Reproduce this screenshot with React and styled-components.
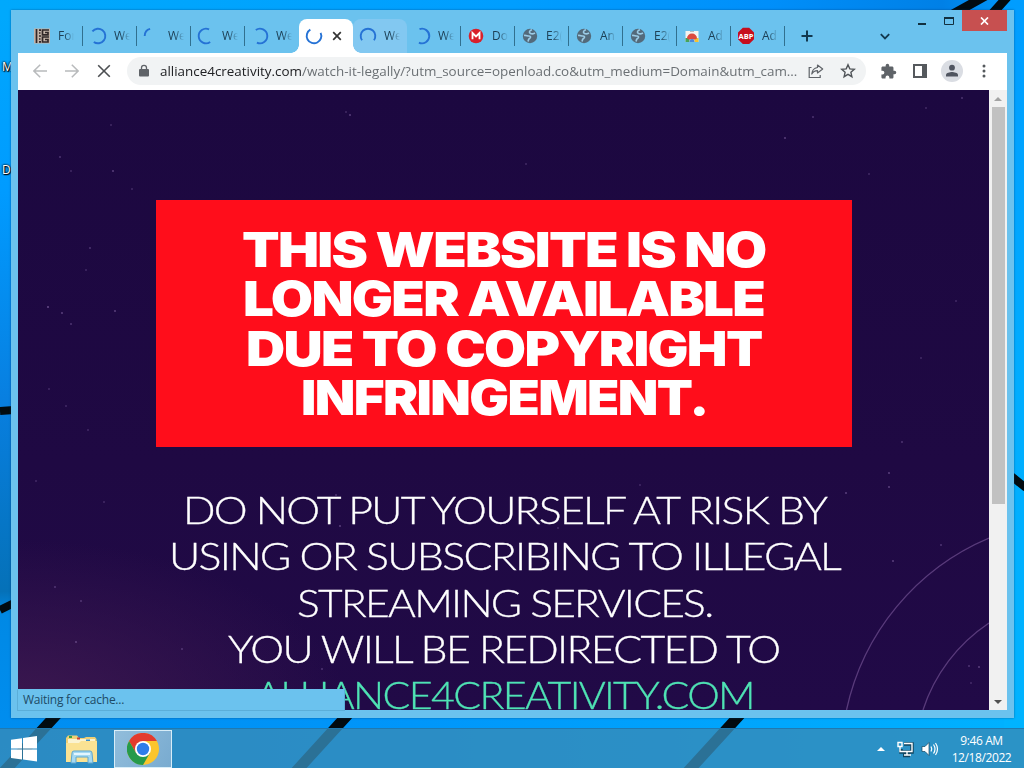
import React, { useLayoutEffect, useRef, useState } from "react";
import styled, { createGlobalStyle, css } from "styled-components";

const GlobalStyle = createGlobalStyle`
  * {
    box-sizing: border-box;
  }
  body {
    margin: 0;
    overflow: hidden;
    font-family: "Open Sans", "Noto Sans", sans-serif;
  }
`;

const Desktop = styled.div`
  position: relative;
  width: 1024px;
  height: 768px;
  overflow: hidden;
  display: flex;
  flex-direction: column;
  background: linear-gradient(90deg, #008df0 0%, #0096fa 40%, #00b2ff 100%);
`;

const Wallpaper = styled.svg`
  position: absolute;
  top: 0;
  left: 0;
`;

const DesktopLabel = styled.span`
  position: absolute;
  left: 2px;
  top: ${(props) => props.$top}px;
  font-size: 12px;
  line-height: 14px;
  color: white;
  text-shadow: 1px 1px 1px black, 0 0 2px black, 0 0 2px black;
`;

const Window = styled.div`
  position: relative;
  width: 1003px;
  height: 708px;
  margin: 10px 0 10px 11px;
  padding: 0 7px 8px;
  display: flex;
  flex-direction: column;
  background: #6bc2ee;
  box-shadow: 0 0 2px rgba(0, 50, 100, 0.55);
`;

const TabStrip = styled.div`
  height: 43px;
  padding-left: 11px;
  display: flex;
  align-items: flex-end;
`;

const TabCell = styled.div`
  position: relative;
  width: 54px;
  height: 34px;
  padding-left: 7px;
  display: flex;
  align-items: center;
  gap: 8px;
  border-radius: 8px 8px 0 0;
  &:first-child {
    padding-left: 5px;
  }
  ${(props) =>
    props.$hover &&
    css`
      background: #82c8f1;
    `}
  ${(props) =>
    props.$active &&
    css`
      gap: 7px;
      background: white;
      &:before,
      &:after {
        content: "";
        position: absolute;
        bottom: 0;
        width: 8px;
        height: 8px;
      }
      &:before {
        left: -8px;
        background: radial-gradient(circle at 0 0, transparent 7.5px, white 8px);
      }
      &:after {
        right: -8px;
        z-index: 1;
        background: radial-gradient(circle at 100% 0, transparent 7.5px, white 8px);
      }
    `}
  ${(props) =>
    props.$divider &&
    css`
      &:after {
        content: "";
        position: absolute;
        right: 0;
        top: 7px;
        width: 1px;
        height: 20px;
        background: #31708f;
      }
    `}
`;

const TabTitle = styled.span`
  width: 16px;
  overflow: hidden;
  white-space: nowrap;
  font-size: 12px;
  line-height: 18px;
  color: #1d4056;
  mask-image: linear-gradient(90deg, black 40%, transparent 100%);
`;

const StripButton = styled.div`
  width: 28px;
  height: 34px;
  margin-left: ${(props) => props.$gap}px;
  display: flex;
  align-items: center;
  justify-content: center;
`;

const WindowControls = styled.div`
  align-self: flex-start;
  margin-left: auto;
  display: flex;
`;

const ControlButton = styled.div`
  width: ${(props) => (props.$close ? 45 : 27)}px;
  height: 21px;
  display: flex;
  align-items: center;
  justify-content: center;
  background: ${(props) => (props.$close ? "#c75050" : "transparent")};
`;

const Toolbar = styled.div`
  height: 37px;
  padding: 0 7px 1px 6px;
  display: flex;
  align-items: center;
  background: white;
`;

const ToolButton = styled.div`
  width: 32px;
  height: 32px;
  display: flex;
  align-items: center;
  justify-content: center;
`;

const Omnibox = styled.div`
  width: 739px;
  height: 28px;
  margin: 0 6px 0 7px;
  padding: 0 2px 0 10px;
  display: flex;
  align-items: center;
  border-radius: 14px;
  background: #f1f3f4;
`;

const UrlBox = styled.div`
  width: 637px;
  margin-left: 9px;
  margin-right: 3px;
  font-size: 13.5px;
  line-height: 20px;
  color: #6b7074;
`;

const Host = styled.span`
  color: #202124;
`;

const Viewport = styled.div`
  flex: 1;
  min-height: 0;
  display: flex;
`;

const Page = styled.div`
  position: relative;
  width: 971px;
  padding-top: 110px;
  overflow: hidden;
  display: flex;
  flex-direction: column;
  align-items: center;
  background: radial-gradient(ellipse 330px 170px at 0% 100%, #3c184f 0%, rgba(60, 24, 79, 0) 100%),
    linear-gradient(180deg, #1c0840 0%, #1f0943 60%, #210a47 100%);
`;

const Sky = styled.svg`
  position: absolute;
  top: 0;
  left: 0;
`;

const Banner = styled.div`
  position: relative;
  flex-shrink: 0;
  width: 696px;
  height: 247px;
  padding-top: 25px;
  display: flex;
  flex-direction: column;
  align-items: center;
  background: #ff0d1b;
  font-family: Inter, sans-serif;
  font-weight: 900;
  font-size: 48.5px;
  line-height: 49.3px;
  letter-spacing: -1.5px;
  color: white;
`;

const Message = styled.div`
  position: relative;
  flex-shrink: 0;
  padding-top: 40px;
  display: flex;
  flex-direction: column;
  align-items: center;
  font-family: Lato, sans-serif;
  font-weight: 300;
  font-size: 37px;
  line-height: 46.3px;
  letter-spacing: -1.5px;
  -webkit-text-stroke: 0.3px;
  color: white;
`;

const FitBox = styled.div`
  width: ${(props) => props.$width}px;
  margin-left: ${(props) => props.$shift || 0}px;
  white-space: nowrap;
  color: ${(props) => props.$color || "inherit"};
`;

const FitText = styled.span`
  display: inline-block;
  transform-origin: 0 50%;
`;

const Scrollbar = styled.div`
  width: 18px;
  padding: 0 2px;
  display: flex;
  flex-direction: column;
  align-items: center;
  background: #f1f1f1;
`;

const ScrollArrow = styled.div`
  height: 17px;
  display: flex;
  align-items: center;
`;

const ScrollThumb = styled.div`
  width: 13px;
  height: 397px;
  margin-bottom: auto;
  background: #c1c1c1;
`;

const StatusBubble = styled.div`
  position: absolute;
  left: 6px;
  bottom: 7px;
  width: 328px;
  height: 22px;
  padding-left: 5px;
  border: 1px solid #5baed9;
  border-top-color: #6bc2ee;
  background: #6bc2ee;
  font-size: 12px;
  line-height: 20px;
  letter-spacing: -0.25px;
  color: #1d4b66;
`;

const Taskbar = styled.div`
  position: relative;
  height: 40px;
  display: flex;
  align-items: center;
  border-top: 1px solid #2079b0;
  background: rgba(54, 139, 184, 0.8);
`;

const TaskButton = styled.div`
  width: ${(props) => props.$width}px;
  height: 38px;
  margin-left: ${(props) => props.$gap || 0}px;
  display: flex;
  align-items: center;
  justify-content: center;
  ${(props) =>
    props.$active &&
    css`
      border: 1px solid #d7edf8;
      background: linear-gradient(120deg, #91bddb, #79abd0);
    `}
`;

const Tray = styled.div`
  margin-left: auto;
  padding-right: 4px;
  display: flex;
  align-items: center;
`;

const Clock = styled.div`
  width: 77px;
  font-size: 12px;
  line-height: 17px;
  letter-spacing: -0.4px;
  text-align: center;
  color: white;
`;

const tabs = [
  { icon: "forum", title: "For", divider: true },
  { icon: "spinner", arc: [-50, 215], title: "We", divider: true },
  { icon: "spinner", arc: [270, 345], title: "We", divider: true },
  { icon: "spinner", arc: [145, 385], title: "We", divider: true },
  { icon: "spinner", arc: [-35, 205], title: "We" },
  { icon: "spinner", arc: [65, 330], active: true },
  { icon: "spinner", arc: [-125, 125], title: "We", hover: true },
  { icon: "spinner", arc: [-20, 205], title: "We", divider: true },
  { icon: "mega", title: "Do", divider: true },
  { icon: "globe", title: "E2(", divider: true },
  { icon: "globe", title: "An", divider: true },
  { icon: "globe", title: "E2(", divider: true },
  { icon: "store", title: "Ad", divider: true },
  { icon: "abp", title: "Ad", divider: true },
];

const stars = [
  [93, 35, 0.3], [42, 67, 0.4], [53, 81, 0.3], [95, 81, 0.5], [114, 99, 0.3],
  [72, 158, 0.4], [68, 180, 0.3], [30, 217, 0.6], [44, 223, 0.5], [53, 234, 0.4],
  [97, 221, 0.5], [31, 299, 0.3], [48, 316, 0.3], [70, 340, 0.3], [18, 391, 0.3],
  [86, 412, 0.3], [37, 497, 0.4], [63, 511, 0.4], [58, 552, 0.5], [164, 559, 0.4],
  [332, 25, 0.5], [328, 22, 0.3], [508, 74, 0.3], [795, 27, 0.4], [767, 48, 0.5],
  [944, 8, 0.4], [908, 18, 0.3], [851, 84, 0.3], [871, 383, 0.5], [871, 397, 0.5],
  [828, 403, 0.5], [923, 455, 0.4], [875, 471, 0.5], [951, 576, 0.4], [961, 577, 0.5],
  [953, 593, 0.3], [322, 436, 0.5], [318, 405, 0.4], [304, 579, 0.4], [884, 352, 0.4],
  [168, 604, 0.3], [622, 395, 0.3], [903, 268, 0.3], [938, 211, 0.3], [540, 438, 0.3],
];

function arcPath(start, end) {
  const point = (deg) => {
    const a = ((deg - 90) * Math.PI) / 180;
    return `${8 + 7.3 * Math.cos(a)} ${8 + 7.3 * Math.sin(a)}`;
  };
  return `M${point(start)}A7.3 7.3 0 ${end - start > 180 ? 1 : 0} 1 ${point(end)}`;
}

function Favicon({ icon, arc }) {
  return (
    <svg width="16" height="16" viewBox="0 0 16 16" overflow="visible">
      {icon === "spinner" && (
        <path d={arcPath(arc[0], arc[1])} fill="none" stroke="#2572d5" strokeWidth="1.9" />
      )}
      {icon === "forum" && (
        <g>
          <path d="M0 .5h16v15H0z" fill="#c3b4a9" />
          <path
            d="M2.500 1v14M5 2.200h2M5 5h1.500M5 8h2M5 11h1.500M5 13.800h2M15 2H8.500v4.800H14V4.500h-3M15 9H8.500v5H14v-2.500h-3"
            fill="none"
            stroke="#312728"
            strokeWidth="1.7"
          />
        </g>
      )}
      {icon === "mega" && (
        <g>
          <circle cx="8" cy="8" r="7.3" fill="#d9202b" />
          <path d="M4.500 11.200V5L8 8.500 11.500 5v6.200" fill="none" stroke="white" strokeWidth="1.8" />
        </g>
      )}
      {icon === "globe" && (
        <g>
          <circle cx="8" cy="8" r="7.2" fill="#536a7b" />
          <path
            d="M2 7.500c2-.5 3 .5 5 .5s2 1.500.5 2.500-1 2-1.500 3M10 1.800C7.500 2.500 6.500 4.500 8.500 5.500s2.500.5 4.500-.5"
            fill="none"
            stroke="#9bcbe6"
            strokeWidth="1.6"
          />
        </g>
      )}
      {icon === "store" && (
        <g>
          <path d="M1.500 3h13v11h-13z" fill="#f5f3ef" />
          <path d="M1.500 10h4v4h-4z" fill="#47a35b" />
          <path d="M10.500 10h4v4h-4z" fill="#f3c230" />
          <path d="M3 10.500a5 5 0 0 1 10 0l-2 1H5z" fill="#dc4a3e" />
          <path d="M5.500 14a2.500 3 0 0 1 5 0z" fill="#4b88dc" />
          <path d="M6 3.500h4" stroke="#b6b9bd" />
        </g>
      )}
      {icon === "abp" && (
        <g>
          <path d="M4.800 -.3h6.400l4.800 4.800v6.800l-4.800 4.800H4.800L0 11.300V4.500z" fill="#c70d1d" />
          <text
            x="8"
            y="10.8"
            textAnchor="middle"
            fontSize="7.5"
            fontWeight="700"
            fontFamily="Open Sans, sans-serif"
            fill="white"
          >
            ABP
          </text>
        </g>
      )}
    </svg>
  );
}

// Stretches one line of text to the given width.
function FitLine({ width, shift, color, children }) {
  const ref = useRef(null);
  const [scale, setScale] = useState(1);

  useLayoutEffect(() => {
    const fit = () => setScale(width / ref.current.offsetWidth);
    fit();
    document.fonts.ready.then(fit);
  }, [width]);

  return (
    <FitBox $width={width} $shift={shift} $color={color}>
      <FitText ref={ref} style={{ transform: `scaleX(${scale})` }}>
        {children}
      </FitText>
    </FitBox>
  );
}

function Tab({ tab }) {
  return (
    <TabCell $active={tab.active} $hover={tab.hover} $divider={tab.divider}>
      <Favicon icon={tab.icon} arc={tab.arc} />
      {tab.active ? (
        <svg width="16" height="16" viewBox="0 0 16 16">
          <path d="M4.200 4.200l7.600 7.600M11.800 4.200l-7.600 7.600" stroke="#333" strokeWidth="1.700" />
        </svg>
      ) : (
        <TabTitle>{tab.title}</TabTitle>
      )}
    </TabCell>
  );
}

function Tabs() {
  return (
    <TabStrip>
      {tabs.map((tab, i) => (
        <Tab key={i} tab={tab} />
      ))}
      <StripButton $gap={8}>
        <svg width="12" height="12" viewBox="0 0 12 12">
          <path d="M6 .5v11M.5 6h11" stroke="#12384f" strokeWidth="2" />
        </svg>
      </StripButton>
      <StripButton $gap={50}>
        <svg width="10" height="7" viewBox="0 0 10 7">
          <path d="M.8 1.200L5 5.400l4.200-4.200" fill="none" stroke="#12384f" strokeWidth="1.800" />
        </svg>
      </StripButton>
      <WindowControls>
        <ControlButton>
          <svg width="10" height="8" viewBox="0 0 10 8">
            <path d="M1 7h8" stroke="#12303f" strokeWidth="2" />
          </svg>
        </ControlButton>
        <ControlButton>
          <svg width="10" height="8" viewBox="0 0 10 8">
            <path d="M.5 1v6.500h9V1" fill="none" stroke="#12303f" />
            <path d="M0 1h10" stroke="#12303f" strokeWidth="2" />
          </svg>
        </ControlButton>
        <ControlButton $close>
          <svg width="9" height="8" viewBox="0 0 9 8">
            <path d="M1 .5l7 7M8 .5l-7 7" stroke="white" strokeWidth="1.700" />
          </svg>
        </ControlButton>
      </WindowControls>
    </TabStrip>
  );
}

function AddressBar() {
  return (
    <Toolbar>
      <ToolButton>
        <svg width="14" height="14" viewBox="0 0 14 14" fill="none" stroke="#b8babc" strokeWidth="1.500">
          <path d="M14 7H1M7.200 .7L.9 7l6.300 6.300" />
        </svg>
      </ToolButton>
      <ToolButton>
        <svg width="14" height="14" viewBox="0 0 14 14" fill="none" stroke="#b8babc" strokeWidth="1.500">
          <path d="M0 7h13M6.800 .7L13.100 7l-6.300 6.300" />
        </svg>
      </ToolButton>
      <ToolButton>
        <svg width="14" height="14" viewBox="0 0 14 14" stroke="#4c4f52" strokeWidth="1.600">
          <path d="M1.200 1.200l11.600 11.600M12.800 1.200L1.200 12.800" />
        </svg>
      </ToolButton>
      <Omnibox>
        <svg width="14" height="14" viewBox="0 0 14 14">
          <path d="M3 5h8a1 1 0 0 1 1 1v5.500a1 1 0 0 1-1 1H3a1 1 0 0 1-1-1V6a1 1 0 0 1 1-1z" fill="#5f6368" />
          <path d="M4.500 5.500V3.800a2.500 2.500 0 0 1 5 0v1.700" fill="none" stroke="#5f6368" strokeWidth="1.300" />
        </svg>
        <UrlBox>
          <FitLine width={637}>
            <Host>alliance4creativity.com</Host>
            /watch-it-legally/?utm_source=openload.co&amp;utm_medium=Domain&amp;utm_cam...
          </FitLine>
        </UrlBox>
        <ToolButton>
          <svg width="16" height="16" viewBox="0 0 16 16" fill="none" stroke="#5f6368" strokeWidth="1.200">
            <path d="M3.500 4.500H1.200v10h11v-2.500" />
            <path d="M9.500 2l5.200 4-5.200 4V7.700C6.500 7.700 5 8.800 3.800 11c.3-3.600 2.200-6 5.700-6.500z" strokeLinejoin="round" />
          </svg>
        </ToolButton>
        <ToolButton>
          <svg width="16" height="16" viewBox="0 0 16 16" fill="none" stroke="#505458" strokeWidth="1.400">
            <path d="M8 1.800l1.800 4.100 4.500.4-3.400 3 1 4.400L8 11.400l-3.900 2.300 1-4.400-3.400-3 4.500-.4z" />
          </svg>
        </ToolButton>
      </Omnibox>
      <ToolButton>
        <svg width="17" height="17" viewBox="0 0 24 24" fill="#5f6368">
          <path d="M20.500 11H19V7c0-1.100-.9-2-2-2h-4V3.500a2.500 2.500 0 0 0-5 0V5H4c-1.100 0-2 .9-2 2v3.800h1.500a2.700 2.700 0 0 1 0 5.400H2V20c0 1.100.9 2 2 2h3.800v-1.500a2.700 2.700 0 0 1 5.400 0V22H17c1.100 0 2-.9 2-2v-4h1.500a2.500 2.500 0 0 0 0-5z" />
        </svg>
      </ToolButton>
      <ToolButton>
        <svg width="14" height="14" viewBox="0 0 14 14">
          <path d="M1 1h12v12H1z" fill="none" stroke="#55595d" strokeWidth="2" />
          <path d="M9 0h5v14H9z" fill="#55595d" />
        </svg>
      </ToolButton>
      <ToolButton>
        <svg width="22" height="22" viewBox="0 0 22 22">
          <circle cx="11" cy="11" r="11" fill="#dadde3" />
          <circle cx="11" cy="7.700" r="2.900" fill="#505560" />
          <path d="M5 16.500v-1.700c0-2 4-2.900 6-2.900s6 .9 6 2.900v1.700z" fill="#505560" />
        </svg>
      </ToolButton>
      <ToolButton>
        <svg width="4" height="14" viewBox="0 0 4 14" fill="#55595d">
          <circle cx="2" cy="2" r="1.500" />
          <circle cx="2" cy="7" r="1.500" />
          <circle cx="2" cy="12" r="1.500" />
        </svg>
      </ToolButton>
    </Toolbar>
  );
}

function Content() {
  return (
    <Page>
      <Sky width="971" height="620" viewBox="0 0 971 620">
        {stars.map(([x, y, opacity], i) => (
          <circle key={i} cx={x} cy={y} r="1.100" fill="#8d6fae" opacity={opacity} />
        ))}
        <g fill="none" stroke="#593b7b" strokeWidth="1.300">
          <path d="M971 448A242 242 0 0 0 828.500 620" />
          <path d="M971 533A166 166 0 0 0 905 620" />
        </g>
      </Sky>
      <Banner>
        <FitLine width={523}>THIS WEBSITE IS NO</FitLine>
        <FitLine width={521}>LONGER AVAILABLE</FitLine>
        <FitLine width={515}>DUE TO COPYRIGHT</FitLine>
        <FitLine width={407} shift={2}>INFRINGEMENT.</FitLine>
      </Banner>
      <Message>
        <FitLine width={643} shift={2}>DO NOT PUT YOURSELF AT RISK BY</FitLine>
        <FitLine width={671} shift={2}>USING OR SUBSCRIBING TO ILLEGAL</FitLine>
        <FitLine width={415} shift={2}>STREAMING SERVICES.</FitLine>
        <FitLine width={551}>YOU WILL BE REDIRECTED TO</FitLine>
        <FitLine width={499} shift={2} color="#4fe3b4">ALLIANCE4CREATIVITY.COM</FitLine>
      </Message>
    </Page>
  );
}

function StartBar() {
  return (
    <Taskbar>
      <TaskButton $width={48}>
        <svg width="26" height="26" viewBox="0 0 26 26" fill="white">
          <path d="M0 3.800l11-1.600v10.200H0zM12 2l14-2v12.400H12zM0 13.400h11v10.200L0 22zM12 13.400h14V25.500l-14-2z" />
        </svg>
      </TaskButton>
      <TaskButton $width={50} $gap={8}>
        <svg width="33" height="30" viewBox="0 0 33 30">
          <path d="M1 4l2-2.500h9L14 4h5l2-1h9l1.500 2v23L1 28z" fill="#efcf75" />
          <path d="M3 5h27v5H3z" fill="#faf3d1" />
          <path d="M4 3h3" stroke="#34a247" strokeWidth="2" />
          <path d="M12 4.500h3" stroke="#cf4032" strokeWidth="2" />
          <path d="M21 6.500h4" stroke="#3a8fcb" strokeWidth="2" />
          <path d="M1 9h13l2-2h16v21H1z" fill="#fae293" />
          <path d="M6 29l1-10q0-2 2-2h16q2 0 2 2l1 10h-5v-6H11v6z" fill="#a5d9f2" stroke="#5da6cf" />
          <path d="M9 20h16" stroke="#e3f6ff" strokeWidth="2" />
        </svg>
      </TaskButton>
      <TaskButton $width={58} $gap={8} $active>
        <svg width="32" height="32" viewBox="0 0 32 32">
          <circle cx="16" cy="16" r="16" fill="#fbc52d" />
          <path d="M2.100 8A16 16 0 0 1 29.900 8H16l-6.900 12z" fill="#e33b2e" />
          <path d="M2.100 8A16 16 0 0 0 16 32l6.900-12H9.100z" fill="#269a4b" />
          <circle cx="16" cy="16" r="8" fill="white" />
          <circle cx="16" cy="16" r="6.200" fill="#2f7de9" />
        </svg>
      </TaskButton>
      <Tray>
        <svg width="74" height="20" viewBox="0 0 74 20" fill="none">
          <path d="M8 12h8l-4-4z" fill="white" />
          <path d="M35 5h8v8H32v-3M37 13v3M34 16.500h7" stroke="#12455f" strokeWidth="3.500" />
          <path d="M29 3.500h4v4h-4zM31 7.500v5h3M35 4.500h8v8H33M38 12.500v3M35 16h7" stroke="white" strokeWidth="1.400" />
          <path d="M53 7.500h3l4-4v13l-4-4h-3z" fill="white" stroke="#12455f" strokeWidth=".7" />
          <path d="M62 7.500q1.500 2.500 0 5M64.500 5.500q3 4.500 0 9M66.500 4q4 6 0 12" stroke="white" strokeWidth="1.200" />
        </svg>
        <Clock>
          <div>9:46 AM</div>
          <div>12/18/2022</div>
        </Clock>
      </Tray>
    </Taskbar>
  );
}

function App() {
  return (
    <Desktop>
      <GlobalStyle />
      <Wallpaper width="1024" height="768" viewBox="0 0 1024 768">
        <defs>
          <linearGradient id="leftEdge" x1="0" y1="0" x2="0" y2="1">
            <stop offset="0" stopColor="#00a9fc" />
            <stop offset=".25" stopColor="#009bff" />
            <stop offset=".52" stopColor="#087fe0" />
            <stop offset=".77" stopColor="#0571b8" />
            <stop offset=".8" stopColor="#0089e5" />
            <stop offset="1" stopColor="#008ff3" />
          </linearGradient>
          <linearGradient id="topEdge" x1="0" y1="0" x2="1" y2="0">
            <stop offset="0" stopColor="#00a9fc" />
            <stop offset=".5" stopColor="#009eff" />
            <stop offset=".75" stopColor="#008ffa" />
            <stop offset=".92" stopColor="#0080e6" />
            <stop offset="1" stopColor="#009dff" />
          </linearGradient>
          <linearGradient id="rightEdge" x1="0" y1="0" x2="0" y2="1">
            <stop offset="0" stopColor="#009dff" />
            <stop offset=".5" stopColor="#00adff" />
            <stop offset="1" stopColor="#00b4ff" />
          </linearGradient>
        </defs>
        <path d="M0 0h20v768H0z" fill="url(#leftEdge)" />
        <path d="M0 0h1024v20H0z" fill="url(#topEdge)" />
        <path d="M1004 0h20v768h-20z" fill="url(#rightEdge)" />
        <g stroke="#020b10" strokeWidth="8" fill="none">
          <path d="M0 411l14-1M0 610l14-7" />
          <path d="M57 714L0 776M352 710L290 778M746 708L682 778" strokeWidth="11" />
          <path d="M953 14l36-20M992 14l18-20" strokeWidth="9" />
          <path d="M1010 475l16 13" />
        </g>
      </Wallpaper>
      <DesktopLabel $top={60}>M</DesktopLabel>
      <DesktopLabel $top={163}>D</DesktopLabel>
      <Window>
        <Tabs />
        <AddressBar />
        <Viewport>
          <Content />
          <Scrollbar>
            <ScrollArrow>
              <svg width="8" height="4" viewBox="0 0 8 4">
                <path d="M0 4l4-4 4 4z" fill="#a3a3a3" />
              </svg>
            </ScrollArrow>
            <ScrollThumb />
            <ScrollArrow>
              <svg width="8" height="4" viewBox="0 0 8 4">
                <path d="M0 0l4 4 4-4z" fill="#505050" />
              </svg>
            </ScrollArrow>
          </Scrollbar>
        </Viewport>
        <StatusBubble>Waiting for cache...</StatusBubble>
      </Window>
      <StartBar />
    </Desktop>
  );
}

export default App;
